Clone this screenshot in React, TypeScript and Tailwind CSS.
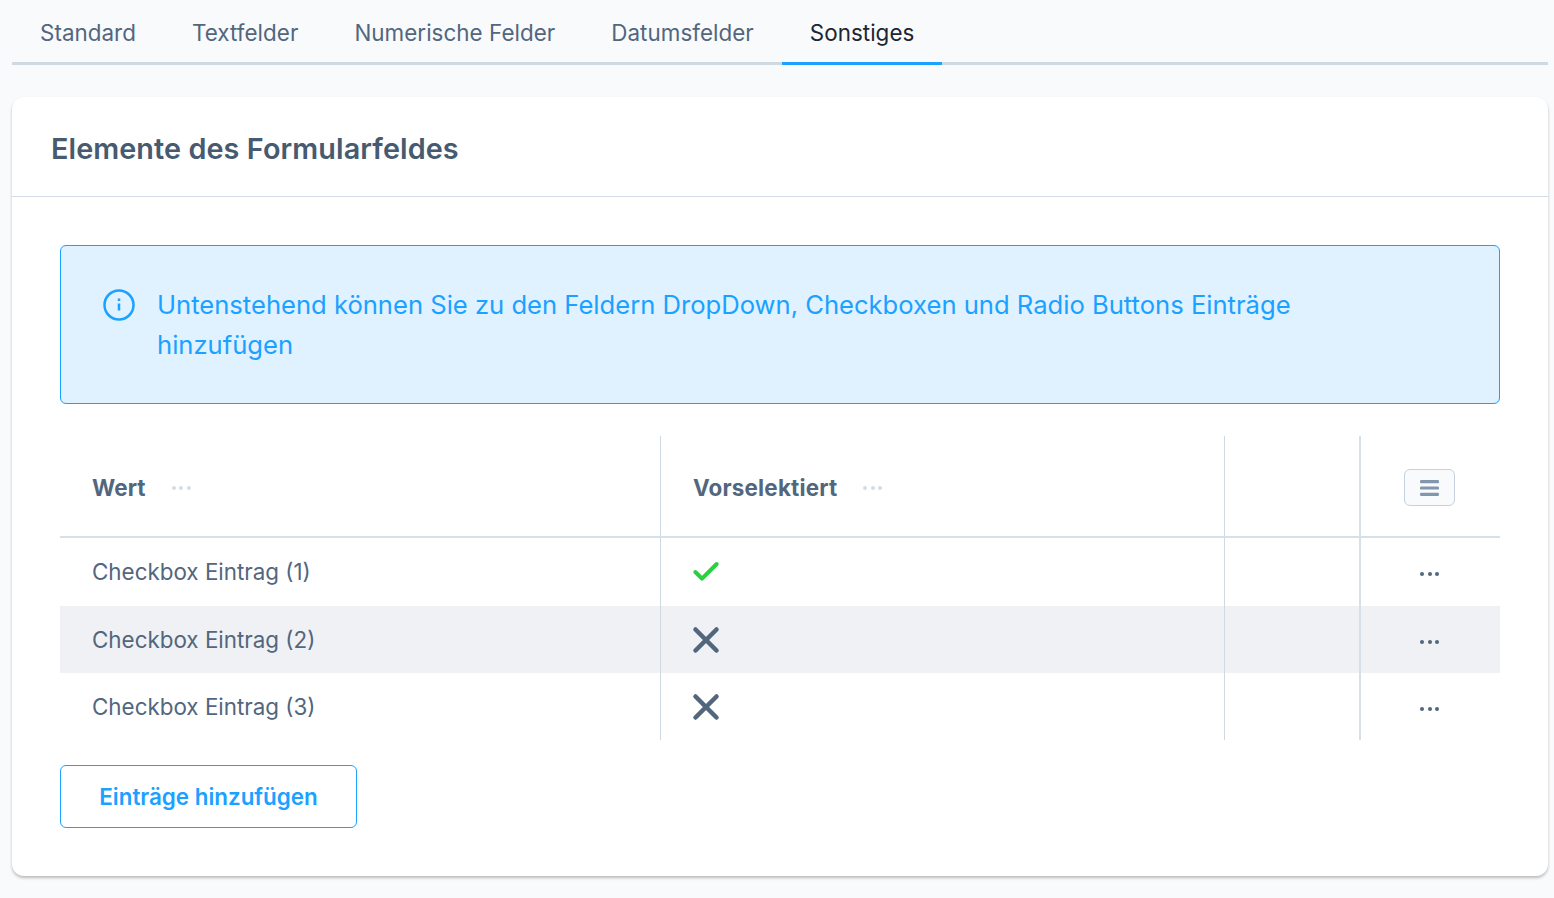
import { Check, X } from 'lucide-react'

const tabs = ['Standard', 'Textfelder', 'Numerische Felder', 'Datumsfelder', 'Sonstiges']

const rows = [
  { label: 'Checkbox Eintrag (1)', selected: true, striped: false, height: 'h-[68px]' },
  { label: 'Checkbox Eintrag (2)', selected: false, striped: true, height: 'h-[67px]' },
  { label: 'Checkbox Eintrag (3)', selected: false, striped: false, height: 'h-[67px]' },
]

function Dots({ className }: { className: string }) {
  return (
    <span className="flex items-center gap-[3.5px]">
      <span className={`h-1 w-1 rounded-full ${className}`} />
      <span className={`h-1 w-1 rounded-full ${className}`} />
      <span className={`h-1 w-1 rounded-full ${className}`} />
    </span>
  )
}

export default function App() {
  return (
    <div className="h-[898px] overflow-hidden bg-[#f8fafc] pl-3 pr-1.5 font-['Inter',sans-serif] text-[#52667e]">
      {/* Tabs */}
      <div className="flex h-[65px] border-b-[3px] border-[#cfd9e2]">
        {tabs.map((tab) => (
          <div
            key={tab}
            className={`-mb-[3px] flex h-[65px] items-center border-b-[3px] px-7 pt-[3px] text-[22.4px] tracking-[0.04px] ${
              tab === 'Sonstiges' ? 'border-[#1ba1ff] text-[#1d2530]' : 'border-transparent'
            }`}
          >
            {tab}
          </div>
        ))}
      </div>

      {/* Card */}
      <div className="mt-8 h-[779px] rounded-xl bg-white shadow-[0_2px_3px_rgba(0,0,0,0.25)]">
        <div className="flex h-[100px] items-center border-b border-[#d5dee6] px-[39px] pt-1">
          <h1 className="text-[28.8px] font-semibold tracking-[0.08px] text-[#465a70]">Elemente des Formularfeldes</h1>
        </div>

        <div className="px-12 pt-12">
          {/* Info banner */}
          <div className="flex h-[159px] gap-[22px] rounded-md border border-[#1ba1ff] bg-[#e0f1ff] pl-[42px] pr-[200px] pt-[39px] text-[25.6px] leading-10 text-[#1ba1ff]">
            <svg viewBox="0 0 32 32" className="mt-1 h-8 w-8 shrink-0" fill="none" stroke="currentColor">
              <circle cx="16" cy="16" r="14.5" strokeWidth="2.5" />
              <path d="M16 14.5v7" strokeWidth="2.5" />
              <path d="M16 9.5v2.5" strokeWidth="2.5" />
            </svg>
            <p>Untenstehend können Sie zu den Feldern DropDown, Checkboxen und Radio Buttons Einträge hinzufügen</p>
          </div>

          {/* Table */}
          <div className="mt-8">
            <div className="grid h-[102px] grid-cols-[600px_564px_135px_141px] border-b-2 border-[#d8e0e7]">
              <div className="flex items-center gap-[26px] pl-8 pt-1 text-[22.4px] font-bold tracking-[0.1px]">
                Wert
                <Dots className="bg-[#d4dce5]" />
              </div>
              <div className="flex items-center gap-[26px] border-l border-[#cfd9e2] pl-8 pt-1 text-[22.4px] font-bold tracking-[0.2px]">
                Vorselektiert
                <Dots className="bg-[#d4dce5]" />
              </div>
              <div className="border-l border-[#cfd9e2]" />
              <div className="flex items-center justify-center border-l-2 border-[#d8e0e7] pr-0.5 pt-[3px]">
                <span className="flex h-[37px] w-[51px] items-center justify-center rounded-md border border-[#c5d1dd] bg-[#f8fafc]">
                  <svg viewBox="0 0 19 16" className="h-4 w-[19px]" fill="#8296ad">
                    <rect x="0" y="0" width="19" height="3.2" rx="1.2" />
                    <rect x="0" y="6.4" width="19" height="3.2" rx="1.2" />
                    <rect x="0" y="12.8" width="19" height="3.2" rx="1.2" />
                  </svg>
                </span>
              </div>
            </div>

            {rows.map((row) => (
              <div
                key={row.label}
                className={`grid grid-cols-[600px_564px_135px_141px] ${row.height} ${row.striped ? 'bg-[#eff1f5]' : ''}`}
              >
                <div className="flex items-center pl-8 text-[22.4px]">{row.label}</div>
                <div className="flex items-center border-l border-[#cfd9e2] pl-6">
                  {row.selected ? (
                    <Check className="ml-[5px] h-8 w-8 text-[#27d13f]" strokeWidth={3} />
                  ) : (
                    <X className="h-[42px] w-[42px] text-[#52667e]" strokeWidth={2.6} />
                  )}
                </div>
                <div className="border-l border-[#cfd9e2]" />
                <div className="flex items-center justify-center border-l-2 border-[#d8e0e7] pr-0.5 pt-1">
                  <Dots className="bg-[#52667e]" />
                </div>
              </div>
            ))}
          </div>

          <button className="mt-[25px] h-[63px] w-[297px] rounded-md border border-[#1ba1ff] bg-white text-[22.4px] font-semibold text-[#1ba1ff]">
            Einträge hinzufügen
          </button>
        </div>
      </div>
    </div>
  )
}
